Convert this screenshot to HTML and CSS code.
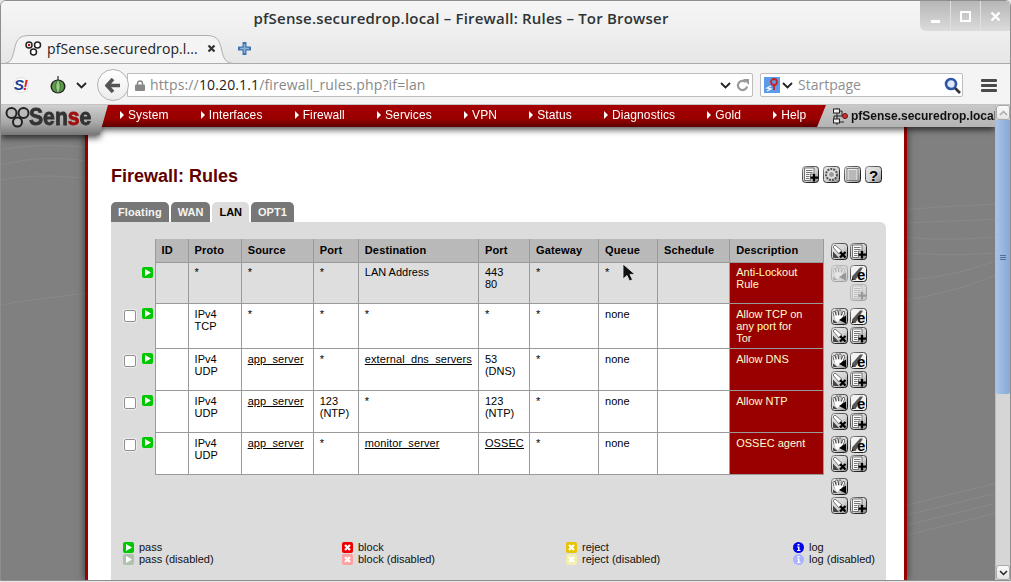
FILE: index.html
```html
<!DOCTYPE html>
<html lang="en">
<head>
<meta charset="utf-8">
<title>pfSense.securedrop.local - Firewall: Rules - Tor Browser</title>
<link rel="stylesheet" href="styles.css">
</head>
<body>
<svg class="defs" width="0" height="0" aria-hidden="true">
  <defs>
    <linearGradient id="bev" x1="0" y1="0" x2="1" y2="1"><stop offset="0" stop-color="#e8e8e8"/><stop offset=".55" stop-color="#d4d4d4"/><stop offset="1" stop-color="#8a8a8a"/></linearGradient>
    <linearGradient id="edge" x1="0" y1="0" x2="1" y2="1"><stop offset="0" stop-color="#8c8c8c"/><stop offset=".5" stop-color="#3a3a3a"/><stop offset="1" stop-color="#111"/></linearGradient>
    <symbol id="i-x" viewBox="0 0 17 17">
      <rect x=".5" y=".5" width="16" height="16" rx="3" fill="url(#bev)" stroke="url(#edge)"/>
      <path d="M2 4 4 2l7 6-3 3z" fill="#fff" stroke="#555" stroke-width=".8"/>
      <path d="M2 8.500 8 15H3a1 1 0 0 1-1-1z" fill="#444"/>
      <path d="M9 9l5.500 5.500M14.500 9 9 14.500" stroke="#000" stroke-width="2.300"/>
    </symbol>
    <symbol id="i-plus" viewBox="0 0 17 17">
      <rect x=".5" y=".5" width="16" height="16" rx="3" fill="url(#bev)" stroke="url(#edge)"/>
      <path d="M2.500 2h9.500v6H8.500v6.500h-6z" fill="#fafafa" stroke="#555" stroke-width=".8"/>
      <path d="M4 4.500h6.500M4 6.500h6.500M4 8.500h3.500M4 10.500h3.500M4 12.500h3.500" stroke="#666" stroke-width=".9"/>
      <path d="M12 8v7.500M8.500 11.700h7.500" stroke="#000" stroke-width="2.300"/>
    </symbol>
    <symbol id="i-hand" viewBox="0 0 17 17">
      <rect x=".5" y=".5" width="16" height="16" rx="3" fill="url(#bev)" stroke="url(#edge)"/>
      <path d="M4.500 9 3 4.500M6.500 8 5.800 3M9 8V3M11.200 8.500l1.500-4" stroke="#444" stroke-width="2.800" stroke-linecap="round"/>
      <path d="M4.500 9 3 4.500M6.500 8 5.800 3M9 8V3M11.200 8.500l1.500-4" stroke="#fff" stroke-width="1.400" stroke-linecap="round"/>
      <path d="M3 8.500c2-1.500 6-1.500 9-.5l-2 3-4 3z" fill="#fff"/>
      <path d="M2 11.500l4.500 3.500H3a1 1 0 0 1-1-1z" fill="#444"/>
      <path d="M8 12 15 7.500V15.500z" fill="#000"/>
    </symbol>
    <symbol id="i-e" viewBox="0 0 17 17">
      <rect x=".5" y=".5" width="16" height="16" rx="3" fill="#f2f2f2" stroke="url(#edge)"/>
      <path d="M2 15V11.500L10 2.500h3L5.500 15z" fill="#555"/>
      <path d="M2 15v-2l2 2z" fill="#111"/>
      <text x="7" y="15" class="ic-letter">e</text>
    </symbol>
    <symbol id="i-gear" viewBox="0 0 17 17">
      <rect x=".5" y=".5" width="16" height="16" rx="3" fill="url(#bev)" stroke="url(#edge)"/>
      <circle cx="8.500" cy="8.500" r="5.500" fill="#d8d8d8" stroke="#555" stroke-width="2" stroke-dasharray="2 1"/>
      <circle cx="8.500" cy="8.500" r="3" fill="#9a9a9a" stroke="#eee" stroke-width="1"/>
    </symbol>
    <symbol id="i-list" viewBox="0 0 17 17">
      <rect x=".5" y=".5" width="16" height="16" rx="3" fill="url(#bev)" stroke="url(#edge)"/>
      <rect x="3" y="2.500" width="11" height="12" fill="#eee" stroke="#666" stroke-width=".8"/>
      <path d="M4.500 5h8M4.500 7h8M4.500 9h8M4.500 11h8M4.500 13h8" stroke="#777" stroke-width=".9"/>
    </symbol>
    <symbol id="i-help" viewBox="0 0 17 17">
      <rect x=".5" y=".5" width="16" height="16" rx="3" fill="url(#bev)" stroke="url(#edge)"/>
      <text x="8.500" y="14.500" class="ic-q">?</text>
    </symbol>
    <symbol id="s-play" viewBox="0 0 11 11"><rect width="11" height="11" rx="2" fill="currentColor"/><path d="M3 2l6 3.500L3 9z" class="s-glyph"/></symbol>
    <symbol id="s-x" viewBox="0 0 11 11"><rect width="11" height="11" rx="2" fill="currentColor"/><path d="M3 3l5 5M8 3 3 8" stroke="#fff" stroke-width="2.200"/></symbol>
    <symbol id="s-i" viewBox="0 0 11 11"><circle cx="5.500" cy="5.500" r="5.500" fill="currentColor"/><path d="M4.500 2h2v1.500h-2zM4 4.500h2.500v3.500h1v1H4V8h1V5.500H4z" fill="#fff"/></symbol>
  </defs>
</svg>

<div class="window">
  <header class="titlebar">
    <div class="wintitle">pfSense.securedrop.local – Firewall: Rules – Tor Browser</div>
    <div class="winbtns">
      <span class="winbtn"><i class="gl-min"></i></span>
      <span class="winbtn"><i class="gl-max"></i></span>
      <span class="winbtn"><svg width="11" height="11" viewBox="0 0 11 11"><path d="M1.500 1.500l8 8M9.500 1.500l-8 8" stroke="#fff" stroke-width="2.400"/></svg></span>
    </div>
  </header>

  <div class="tabstrip">
    <div class="btab">
      <svg class="btab-shape" viewBox="0 0 232 29" preserveAspectRatio="none"><path d="M0 28.500C8 28 9 24 11 16 13 6 15 .5 26 .5H204c11 0 13 6 15 16 2 8 4 12 13 12z" fill="#f4f4f4" stroke="#aeaeae"/></svg>
      <svg class="favicon" width="17" height="15" viewBox="0 0 17 15"><circle cx="4" cy="4" r="3" fill="#fff" stroke="#222" stroke-width="1.500"/><circle cx="12.500" cy="4" r="3" fill="#fff" stroke="#222" stroke-width="1.500"/><circle cx="8.500" cy="11" r="3" fill="#fff" stroke="#222" stroke-width="1.500"/><circle cx="4" cy="4" r="1.200" fill="#b00"/></svg>
      <span class="btab-label">pfSense.securedrop.l...</span>
      <svg class="btab-close" width="9" height="9" viewBox="0 0 9 9"><path d="M1.500 1.500l6 6M7.500 1.500l-6 6" stroke="#333" stroke-width="2.200"/></svg>
    </div>
    <svg class="newtab" width="13" height="13" viewBox="0 0 13 13"><path d="M6.500 1v11M1 6.500h11" stroke="#3f74ae" stroke-width="4" stroke-linecap="round"/><path d="M6.500 2v9M2 6.500h9" stroke="#8eb4dd" stroke-width="1.500"/></svg>
  </div>

  <div class="toolbar">
    <svg class="tb-s" width="16" height="16" viewBox="0 0 16 16"><circle cx="8" cy="8" r="7.500" fill="#fff" stroke="#ddd"/><text x="1" y="13" class="tb-s1">S</text><text x="10" y="13" class="tb-s2">!</text></svg>
    <svg class="tb-onion" width="16" height="18" viewBox="0 0 16 18"><path d="M8 0v4" stroke="#555" stroke-width="1.500"/><ellipse cx="8" cy="10.500" rx="7.500" ry="7" fill="#222"/><ellipse cx="8" cy="10.500" rx="6" ry="6" fill="#5d9c4a"/><path d="M8 4c-3 3-3 10 0 13M8 4c3 3 3 10 0 13" fill="#9ccc84" stroke="#2f5d2a" stroke-width=".8"/></svg>
    <svg class="tb-chev" width="11" height="7" viewBox="0 0 11 7"><path d="M1 1l4.500 4.500L10 1" fill="none" stroke="#222" stroke-width="1.800"/></svg>
    <div class="navgroup">
      <div class="backbtn"><svg width="16" height="15" viewBox="0 0 16 15"><path d="M8 1 2 7.500 8 14M2.500 7.500H15" fill="none" stroke="#555" stroke-width="3.600"/></svg></div>
      <div class="urlbar">
        <svg class="lock" width="10" height="11" viewBox="0 0 10 11"><path d="M2.500 5V3.500a2.500 2.500 0 0 1 5 0V5" fill="none" stroke="#888" stroke-width="1.500"/><rect y="4.500" width="10" height="6.500" rx="1" fill="#888"/></svg>
        <span class="url"><span class="dim">https://</span>10.20.1.1<span class="dim">/firewall_rules.php?if=lan</span></span>
        <svg class="url-chev" width="11" height="7" viewBox="0 0 11 7"><path d="M1 1l4.500 4.500L10 1" fill="none" stroke="#222" stroke-width="1.800"/></svg>
        <svg class="reload" width="13" height="13" viewBox="0 0 13 13"><path d="M11 7.500A4.600 4.600 0 1 1 9.500 3" fill="none" stroke="#999" stroke-width="2.200"/><path d="M7 0h6v6z" fill="#999"/></svg>
      </div>
    </div>
    <div class="searchbar">
      <svg width="16" height="16" viewBox="0 0 16 16"><rect width="16" height="16" fill="#5b9be8"/><circle cx="10" cy="5" r="3" fill="none" stroke="#c22" stroke-width="1.800"/><path d="M10 8v5" stroke="#c22" stroke-width="1.800"/><path d="M7 9 3 11l4 1-4 2" fill="none" stroke="#fff" stroke-width="1.200"/></svg>
      <svg class="search-chev" width="11" height="7" viewBox="0 0 11 7"><path d="M1 1l4.500 4.500L10 1" fill="none" stroke="#222" stroke-width="1.800"/></svg>
      <span class="search-ph">Startpage</span>
      <svg class="magnifier" width="17" height="17" viewBox="0 0 17 17"><circle cx="7" cy="7" r="5" fill="#dfe8f6" stroke="#2f55a8" stroke-width="2.600"/><path d="M11 11l5 5" stroke="#333" stroke-width="2.600"/></svg>
    </div>
    <div class="hamburger"><i></i><i></i><i></i></div>
  </div>

  <div class="viewport">
    <div class="site">
      <svg class="waves" width="994" height="476" viewBox="0 0 994 476" fill="none" stroke="#fff" stroke-opacity=".07"><path d="M0 45c30-6 60-6 84-2M0 60c30-8 60-8 84-4M0 75c30-6 60-4 84-2M0 200c30-6 60-8 84-12M906 105c30-4 60-4 90-6M906 118c30-2 60-2 90-4M906 132c30 4 60 2 90 0M906 148c30 2 60 2 90 0M906 175c30-2 60-8 90-20M906 195c30-6 60-12 90-26M906 400c30-8 60-14 90-22M906 410c30-8 60-14 90-22M906 420c30-8 60-14 90-22M906 430c30-8 60-14 90-22"/></svg>
      <nav class="topnav">
        <a class="logo"><svg width="26" height="22" viewBox="0 0 26 22"><circle cx="6.500" cy="7" r="5" fill="#bbb" stroke="#222" stroke-width="2"/><circle cx="18.500" cy="7" r="5" fill="#bbb" stroke="#222" stroke-width="2"/><circle cx="12.500" cy="16" r="4.500" fill="#bbb" stroke="#222" stroke-width="2"/></svg><span class="logo-word">Sen<b>s</b>e</span></a>
        <ul class="menu">
          <li>System</li><li>Interfaces</li><li>Firewall</li><li>Services</li><li>VPN</li><li>Status</li><li>Diagnostics</li><li>Gold</li><li>Help</li>
        </ul>
        <div class="hostname">
          <svg width="15" height="17" viewBox="0 0 15 17"><path d="M4 0v17M4 3h5v5H1v6h10" fill="none" stroke="#222"/><rect x=".5" y="1" width="6" height="4" fill="#eee" stroke="#222"/><rect x=".5" y="11" width="6" height="4" fill="#eee" stroke="#222"/><circle cx="12" cy="8" r="2.500" fill="#c33" stroke="#611"/></svg>
          <span class="hostname-text">pfSense.securedrop.local</span>
        </div>
      </nav>

      <main class="content">
        <div class="headrow">
          <h1>Firewall: Rules</h1>
          <div class="headicons">
            <svg class="ic"><use href="#i-plus"/></svg>
            <svg class="ic"><use href="#i-gear"/></svg>
            <svg class="ic"><use href="#i-list"/></svg>
            <svg class="ic"><use href="#i-help"/></svg>
          </div>
        </div>

        <div class="tabs">
          <span class="tab">Floating</span><span class="tab">WAN</span><span class="tab active">LAN</span><span class="tab">OPT1</span>
        </div>

        <section class="panel">
          <table class="rules">
            <colgroup>
              <col class="c-check"><col class="c-status"><col class="c-id"><col class="c-proto"><col class="c-src"><col class="c-port"><col class="c-dst"><col class="c-dport"><col class="c-gw"><col class="c-queue"><col class="c-sched"><col class="c-desc"><col class="c-act">
            </colgroup>
            <thead>
              <tr>
                <td class="bare"></td><td class="bare"></td>
                <th>ID</th><th>Proto</th><th>Source</th><th>Port</th><th>Destination</th><th>Port</th><th>Gateway</th><th>Queue</th><th>Schedule</th><th>Description</th>
                <td class="bare act"><span class="act-row"><svg class="ic"><use href="#i-x"/></svg><svg class="ic"><use href="#i-plus"/></svg></span></td>
              </tr>
            </thead>
            <tbody>
              <tr class="locked">
                <td class="bare"></td>
                <td class="bare st"><svg class="si green"><use href="#s-play"/></svg></td>
                <td></td><td>*</td><td>*</td><td>*</td><td>LAN Address</td><td>443<br>80</td><td>*</td><td>*</td><td></td>
                <td class="desc">Anti-Lockout Rule</td>
                <td class="bare act">
                  <span class="act-row"><svg class="ic off"><use href="#i-hand"/></svg><svg class="ic"><use href="#i-e"/></svg></span>
                  <span class="act-row"><span class="ic-gap"></span><svg class="ic off"><use href="#i-plus"/></svg></span>
                </td>
              </tr>
              <tr>
                <td class="bare ck"><input type="checkbox" class="check"></td>
                <td class="bare st"><svg class="si green"><use href="#s-play"/></svg></td>
                <td></td><td>IPv4<br>TCP</td><td>*</td><td>*</td><td>*</td><td>*</td><td>*</td><td>none</td><td></td>
                <td class="desc">Allow TCP on any port for Tor</td>
                <td class="bare act">
                  <span class="act-row"><svg class="ic"><use href="#i-hand"/></svg><svg class="ic"><use href="#i-e"/></svg></span>
                  <span class="act-row"><svg class="ic"><use href="#i-x"/></svg><svg class="ic"><use href="#i-plus"/></svg></span>
                </td>
              </tr>
              <tr>
                <td class="bare ck"><input type="checkbox" class="check"></td>
                <td class="bare st"><svg class="si green"><use href="#s-play"/></svg></td>
                <td></td><td>IPv4<br>UDP</td><td><a>app_server</a></td><td>*</td><td><a>external_dns_servers</a></td><td>53<br>(DNS)</td><td>*</td><td>none</td><td></td>
                <td class="desc">Allow DNS</td>
                <td class="bare act">
                  <span class="act-row"><svg class="ic"><use href="#i-hand"/></svg><svg class="ic"><use href="#i-e"/></svg></span>
                  <span class="act-row"><svg class="ic"><use href="#i-x"/></svg><svg class="ic"><use href="#i-plus"/></svg></span>
                </td>
              </tr>
              <tr>
                <td class="bare ck"><input type="checkbox" class="check"></td>
                <td class="bare st"><svg class="si green"><use href="#s-play"/></svg></td>
                <td></td><td>IPv4<br>UDP</td><td><a>app_server</a></td><td>123<br>(NTP)</td><td>*</td><td>123<br>(NTP)</td><td>*</td><td>none</td><td></td>
                <td class="desc">Allow NTP</td>
                <td class="bare act">
                  <span class="act-row"><svg class="ic"><use href="#i-hand"/></svg><svg class="ic"><use href="#i-e"/></svg></span>
                  <span class="act-row"><svg class="ic"><use href="#i-x"/></svg><svg class="ic"><use href="#i-plus"/></svg></span>
                </td>
              </tr>
              <tr>
                <td class="bare ck"><input type="checkbox" class="check"></td>
                <td class="bare st"><svg class="si green"><use href="#s-play"/></svg></td>
                <td></td><td>IPv4<br>UDP</td><td><a>app_server</a></td><td>*</td><td><a>monitor_server</a></td><td><a>OSSEC</a></td><td>*</td><td>none</td><td></td>
                <td class="desc">OSSEC agent</td>
                <td class="bare act">
                  <span class="act-row"><svg class="ic"><use href="#i-hand"/></svg><svg class="ic"><use href="#i-e"/></svg></span>
                  <span class="act-row"><svg class="ic"><use href="#i-x"/></svg><svg class="ic"><use href="#i-plus"/></svg></span>
                </td>
              </tr>
              <tr class="tail">
                <td class="bare" colspan="12"></td>
                <td class="bare act">
                  <span class="act-row"><svg class="ic"><use href="#i-hand"/></svg></span>
                  <span class="act-row"><svg class="ic"><use href="#i-x"/></svg><svg class="ic"><use href="#i-plus"/></svg></span>
                </td>
              </tr>
            </tbody>
          </table>

          <div class="legend">
            <div class="lg lg-pass"><svg class="si green"><use href="#s-play"/></svg><span>pass</span><svg class="si green-off"><use href="#s-play"/></svg><span>pass (disabled)</span></div>
            <div class="lg lg-block"><svg class="si red"><use href="#s-x"/></svg><span>block</span><svg class="si red-off"><use href="#s-x"/></svg><span>block (disabled)</span></div>
            <div class="lg lg-reject"><svg class="si yellow"><use href="#s-x"/></svg><span>reject</span><svg class="si yellow-off"><use href="#s-x"/></svg><span>reject (disabled)</span></div>
            <div class="lg lg-log"><svg class="si blue"><use href="#s-i"/></svg><span>log</span><svg class="si blue-off"><use href="#s-i"/></svg><span>log (disabled)</span></div>
          </div>
        </section>
      </main>
      <svg class="cursor" width="15" height="19" viewBox="0 0 15 19"><path d="M1 1v15l4-3.500 2.500 5.500 3-1.300-2.500-5.300h5z" fill="#111" stroke="#eee" stroke-width=".8"/></svg>
    </div>

    <aside class="scrollbar">
      <div class="sb-btn"><svg width="9" height="6" viewBox="0 0 9 6"><path d="M1 5l3.500-3.500L8 5" fill="none" stroke="#aaa" stroke-width="1.500"/></svg></div>
      <div class="sb-track">
        <div class="sb-thumb"><i></i><i></i><i></i></div>
      </div>
      <div class="sb-btn"><svg width="9" height="6" viewBox="0 0 9 6"><path d="M1 1l3.500 3.500L8 1" fill="none" stroke="#222" stroke-width="1.500"/></svg></div>
    </aside>
  </div>
</div>
</body>
</html>
```
FILE: styles.css
```css
* { box-sizing: border-box; }
html, body { margin: 0; padding: 0; height: 100%; overflow: hidden; background: #e6e6e6; }
body { font-family: "Liberation Sans", Arial, sans-serif; font-size: 11px; color: #000; }
.defs { display: block; height: 0; width: 0; overflow: hidden; }
.ic-letter { font: bold 15px "Liberation Sans", sans-serif; fill: #000; }
.ic-q { font: bold 15px "Liberation Sans", sans-serif; fill: #000; text-anchor: middle; }
.s-glyph { fill: #fff; }

.window { width: 1011px; height: 581px; display: flex; flex-direction: column; border: 1px solid #8e8e8e; border-radius: 6px 6px 0 0; overflow: hidden; background: #f0f0f0; position: relative; }

/* title bar */
.titlebar { height: 34px; flex: none; background: linear-gradient(#f6f6f6, #eeeeee); display: flex; justify-content: center; padding: 8px 89px 0 0; }
.wintitle { font: 600 15px/18px "Open Sans", sans-serif; color: #2e3436; white-space: nowrap; letter-spacing: .2px; }
.winbtns { position: absolute; top: 0; right: 0; height: 30px; display: flex; border-radius: 0 0 0 6px; overflow: hidden; background: linear-gradient(#b6b6b6, #dcdcdc); }
.winbtn { width: 30px; display: flex; align-items: center; justify-content: center; border-left: 1px solid #e0e0e0; }
.winbtn:first-child { border-left: 0; }
.gl-min { display: block; width: 9px; height: 3px; background: #fff; margin-top: 10px; }
.gl-max { display: block; width: 11px; height: 11px; border: 2px solid #fff; }

/* tabs of the browser */
.tabstrip { height: 29px; flex: none; display: flex; align-items: center; background: linear-gradient(#eeeeee, #e6e6e6); border-bottom: 1px solid #ababab; padding-left: 2px; }
.btab { position: relative; width: 232px; height: 29px; margin-bottom: -1px; display: flex; align-items: center; padding: 0 0 2px 22px; }
.btab-shape { position: absolute; inset: 0; width: 100%; height: 100%; }
.favicon, .btab-label, .btab-close { position: relative; }
.btab-label { font: 14px/18px "Open Sans", sans-serif; color: #222; margin-left: 5px; white-space: nowrap; letter-spacing: .1px; }
.btab-close { margin-left: 9px; }
.newtab { margin: -2px 0 0 3px; }

/* toolbar */
.toolbar { height: 41px; flex: none; display: flex; align-items: center; background: #f4f4f4; border-bottom: 1px solid #c4c4c4; padding: 2px 0 0 12px; }
.tb-s { flex: none; }
.tb-s1 { font: italic bold 15px "Liberation Sans", sans-serif; fill: #1c3f94; }
.tb-s2 { font: italic bold 15px "Liberation Sans", sans-serif; fill: #e01b1b; }
.tb-onion { margin-left: 21px; flex: none; }
.tb-chev { margin-left: 10px; flex: none; }
.navgroup { display: flex; align-items: center; margin-left: 10px; }
.backbtn { width: 32px; height: 32px; border-radius: 50%; border: 1px solid #aeb3bb; background: linear-gradient(#fff, #ececec); display: flex; align-items: center; justify-content: center; position: relative; z-index: 1; flex: none; }
.urlbar { width: 626px; height: 24px; margin-left: -2px; background: #fff; border: 1px solid #bdbdbd; border-radius: 0 2px 2px 0; display: flex; align-items: center; padding-left: 7px; }
.lock { flex: none; }
.url { font: 14px/20px "Open Sans", sans-serif; color: #222; margin-left: 5px; white-space: nowrap; letter-spacing: .14px; flex: 1; }
.dim { color: #888; }
.url-chev { margin-right: 5px; flex: none; }
.reload { margin-right: 3px; flex: none; }
.searchbar { width: 203px; height: 24px; margin-left: 7px; background: #fff; border: 1px solid #bdbdbd; border-radius: 2px; display: flex; align-items: center; padding-left: 3px; }
.searchbar > svg { flex: none; }
.search-chev { margin-left: 2px; }
.search-ph { font: 14px/20px "Open Sans", sans-serif; color: #8f8f8f; margin-left: 5px; flex: 1; }
.magnifier { margin-right: 1px; }
.hamburger { margin-left: 18px; display: flex; flex-direction: column; gap: 2px; width: 16px; }
.hamburger i { display: block; height: 3px; background: #4a4a4a; border-radius: 1px; }

/* page */
.viewport { flex: 1; min-height: 0; display: flex; }
.site { width: 994px; flex: none; position: relative; overflow: hidden; background: #808080; display: flex; flex-direction: column; }
.waves { position: absolute; left: 0; top: 0; }
.cursor { position: absolute; left: 621px; top: 158px; z-index: 5; }

.topnav { position: relative; z-index: 3; flex: none; height: 22px; display: flex; background: linear-gradient(#a40000, #990000 62%, #5e0000); filter: drop-shadow(0 3px 3px rgba(0,0,0,.65)); }
.logo { flex: none; width: 107px; height: 30px; display: flex; align-items: center; padding: 0 0 6px 4px; background: linear-gradient(#d0d0d0, #a8a8a8 60%, #777); clip-path: polygon(0 0, 100% 0, 92% 100%, 0 100%); }
.logo-word { display: inline-block; font: bold 23px/26px "Liberation Sans", sans-serif; color: #333; margin-left: -2px; transform: scaleX(.92); transform-origin: left center; -webkit-text-stroke: .8px #333; }
.logo-word b { color: #a01010; -webkit-text-stroke: .8px #a01010; }
.menu { list-style: none; margin: 0; padding: 0 0 0 11px; flex: 1; display: flex; gap: 31.2px; align-items: center; height: 20px; color: #fff; font-size: 12px; white-space: nowrap; letter-spacing: .1px; }
.menu li { position: relative; padding-left: 9px; line-height: 14px; }
.menu li::before { content: ""; position: absolute; left: 1px; top: 3px; border-left: 4px solid #fff; border-top: 4px solid transparent; border-bottom: 4px solid transparent; }
.hostname { flex: none; width: 178px; height: 22px; display: flex; align-items: center; gap: 3px; padding-left: 16px; background: linear-gradient(#c8c8c8, #b4b4b4); clip-path: polygon(9px 0, 100% 0, 100% 100%, 0 100%); overflow: hidden; }
.hostname svg { flex: none; }
.hostname-text { font-weight: bold; font-size: 12px; color: #111; white-space: nowrap; }

.content { width: 822px; margin-left: 84px; flex: 1; min-height: 0; background: #fff; border-left: 3px solid #990000; border-right: 3px solid #990000; padding: 39px 18px 0 23px; box-shadow: 0 0 8px rgba(0,0,0,.6); position: relative; z-index: 1; }
.headrow { display: flex; justify-content: space-between; align-items: flex-start; padding-right: 4px; }
h1 { margin: 0; font-size: 18px; line-height: 20px; font-weight: bold; color: #5e0000; }
.headicons { display: flex; gap: 4px; }
.ic { display: block; width: 17px; height: 17px; flex: none; }
.ic.off { opacity: .3; }
.ic-gap { display: block; width: 17px; height: 17px; flex: none; }

.tabs { display: flex; gap: 2px; margin-top: 16px; height: 20px; }
.tab { padding: 0 7px; background: #777; color: #f4f4f4; font-weight: bold; font-size: 11px; line-height: 20px; border-radius: 5px 5px 0 0; }
.tab:first-child { letter-spacing: .12px; }
.tab.active { background: #dcdcdc; color: #000; }

.panel { background: #dcdcdc; border-radius: 0 6px 0 0; padding-top: 17px; width: 775px; height: 360px; }
.rules { table-layout: fixed; border-collapse: collapse; width: 775px; font-size: 11px; line-height: 12px; }
.c-check { width: 29px; } .c-status { width: 15px; } .c-id { width: 33px; } .c-proto { width: 53px; }
.c-src { width: 72px; } .c-port { width: 45px; } .c-dst { width: 120px; } .c-dport { width: 51px; }
.c-gw { width: 69px; } .c-queue { width: 59px; } .c-sched { width: 72px; } .c-desc { width: 94px; } .c-act { width: 62px; }
.rules th { height: 23px; padding: 0 6px; background: #b9b9b9; border: 1px solid #9a9a9a; border-top: 0; text-align: left; font-weight: bold; white-space: nowrap; letter-spacing: .15px; }
.rules td { height: 42px; padding: 4px 6px 0; background: #fff; border: 1px solid #9a9a9a; vertical-align: top; white-space: nowrap; }
.rules thead td { height: 23px; }
.rules a { text-decoration: underline; color: #000; letter-spacing: .1px; }
.rules tr.locked td { background: #dedede; height: 41px; padding-top: 3px; }
.rules td.desc, .rules tr.locked td.desc { background: #990000; color: #ffffcc; white-space: normal; padding-right: 16px; padding-bottom: 4px; }
.rules td.bare, .rules tr.locked td.bare { background: none; border: 0; padding: 0; }
.rules td.st, .rules tr.locked td.st { padding: 5px 0 0 2px; }
.rules td.ck { padding: 7px 0 0 13px; }
.rules td.act, .rules tr.locked td.act { padding: 1px 0 0 7px; vertical-align: middle; }
.rules thead td.act { padding-top: 2px; }
.rules tr.tail td.act { padding-top: 4px; vertical-align: top; }
.act-row { display: flex; gap: 2px; margin-bottom: 2px; }
.act-row:last-child { margin-bottom: 0; }

.check { appearance: none; -webkit-appearance: none; display: block; width: 12px; height: 12px; margin: 0; background: #fff; border: 1px solid #8f8f8f; border-radius: 2px; box-shadow: 0 0 0 1px #ececec; }
.si { display: block; width: 11px; height: 11px; flex: none; }
.green { color: #00c800; } .green-off { color: #aec3ae; }
.red { color: #f00000; } .red-off { color: #ffa0a0; }
.yellow { color: #e9c400; } .yellow-off { color: #f3eeb0; }
.blue { color: #0000e8; } .blue-off { color: #aab2ff; }

.legend { display: flex; margin-top: 25px; padding-left: 12px; color: #111; line-height: 12px; }
.lg { display: grid; grid-template-columns: 11px auto; column-gap: 5px; align-items: center; justify-items: start; }
.lg-pass { width: 219px; } .lg-block { width: 224px; } .lg-reject { width: 227px; }

/* browser scrollbar */
.scrollbar { width: 15px; flex: none; display: flex; flex-direction: column; background: #d6d6d6; border-left: 1px solid #bbb; }
.sb-btn { height: 15px; flex: none; display: flex; align-items: center; justify-content: center; background: linear-gradient(#fafafa, #e4e4e4); border: 1px solid #aaa; border-radius: 3px; }
.sb-track { flex: 1; min-height: 0; }
.sb-thumb { height: 274px; background: linear-gradient(90deg, #a8c3e6, #86a9d8); display: flex; flex-direction: column; align-items: center; justify-content: center; gap: 1px; border-radius: 0 0 2px 2px; }
.sb-thumb i { display: block; width: 6px; height: 1px; background: #4f6f9f; }
```
